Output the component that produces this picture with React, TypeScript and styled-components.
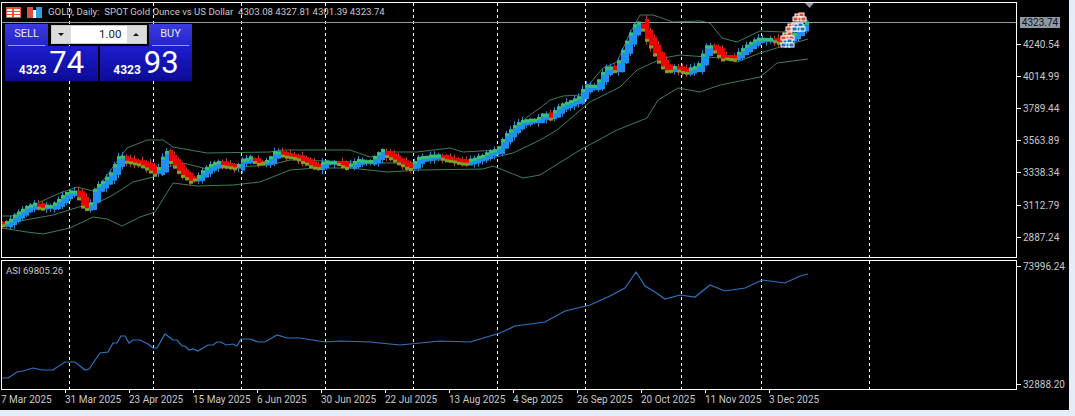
import React from "react";
import styled, { createGlobalStyle } from "styled-components";

const GlobalStyle = createGlobalStyle`
  html, body {
    margin: 0;
    padding: 0;
    background: #e4eef9;
  }
  body {
    font-family: "Roboto", "Liberation Sans", sans-serif;
  }
`;

type Pt = [number, number];

// traced by eye from the reference, page pixels
const closePath: Pt[] = [
  [2, 224], [7, 225], [13, 221], [20, 215], [30, 208], [37, 205], [42, 207], [53, 207], [58, 205], [65, 198],
  [72, 193], [77, 193], [82, 198], [87, 208], [93, 205], [98, 190], [107, 182], [113, 175], [122, 158], [128, 160],
  [140, 163], [150, 167], [157, 173], [163, 168], [167, 153], [173, 160], [183, 172], [193, 180], [200, 178],
  [208, 170], [220, 163], [227, 165], [240, 168], [243, 162], [253, 159], [260, 163], [270, 162], [278, 153],
  [287, 155], [300, 158], [310, 163], [320, 168], [327, 163], [340, 163], [350, 167], [360, 162], [373, 162],
  [385, 152], [393, 157], [403, 163], [413, 168], [420, 160], [433, 157], [442, 157], [453, 160], [468, 163],
  [483, 158], [500, 150], [510, 135], [523, 123], [540, 120], [547, 115], [553, 117], [563, 107], [580, 100],
  [588, 88], [598, 87], [610, 68], [618, 70], [630, 43], [637, 28], [643, 23], [647, 33], [655, 48], [663, 63],
  [670, 70], [678, 68], [687, 72], [700, 68], [710, 47], [718, 50], [723, 57], [737, 58], [743, 52], [760, 40],
  [773, 40], [787, 42], [797, 35], [808, 24],
];

const upperBand: Pt[] = [
  [2, 216], [12, 216], [20, 212], [40, 202], [60, 193], [77, 187], [93, 191], [100, 185], [113, 167], [127, 148],
  [147, 140], [163, 140], [173, 147], [207, 153], [270, 152], [283, 150], [350, 150], [370, 157], [380, 156],
  [390, 152], [417, 152], [450, 148], [463, 152], [497, 150], [527, 117], [540, 108], [550, 100], [563, 96],
  [580, 95], [603, 68], [617, 62], [630, 33], [640, 15], [653, 15], [673, 22], [700, 21], [710, 23], [722, 38],
  [737, 42], [760, 31], [783, 32], [808, 20],
];

const midBand: Pt[] = [
  [20, 221], [53, 215], [82, 206], [93, 205], [113, 195], [133, 182], [153, 177], [167, 167], [183, 163], [207, 169],
  [270, 165], [290, 160], [330, 161], [377, 163], [410, 163], [437, 160], [483, 160], [513, 153], [540, 140],
  [557, 130], [590, 102], [620, 87], [637, 70], [663, 58], [680, 55], [707, 57], [720, 58], [737, 62], [760, 53],
  [780, 47], [808, 39],
];

const lowerBand: Pt[] = [
  [2, 228], [27, 232], [43, 234], [70, 228], [93, 217], [107, 219], [122, 226], [140, 217], [155, 212], [173, 183],
  [197, 186], [233, 185], [260, 182], [270, 178], [290, 170], [317, 168], [350, 168], [387, 172], [420, 170],
  [483, 169], [493, 166], [523, 178], [540, 175], [580, 150], [617, 130], [647, 118], [658, 100], [678, 88],
  [700, 92], [720, 85], [760, 77], [777, 63], [808, 59],
];

const asiPath: Pt[] = [
  [2, 377], [8, 377], [17, 371], [23, 370], [33, 367], [42, 369], [53, 369], [65, 361], [75, 361], [85, 369],
  [89, 368], [100, 352], [108, 351], [113, 342], [117, 342], [121, 335], [125, 335], [129, 342], [133, 339],
  [140, 339], [148, 343], [153, 347], [157, 347], [165, 333], [173, 339], [177, 339], [182, 345], [185, 345],
  [189, 349], [193, 348], [198, 350], [208, 344], [213, 344], [217, 341], [221, 341], [226, 344], [233, 343],
  [237, 345], [241, 338], [250, 338], [258, 341], [265, 341], [277, 334], [287, 337], [300, 337], [325, 341],
  [340, 340], [370, 341], [400, 344], [440, 340], [470, 341], [500, 332], [515, 325], [545, 321], [565, 310],
  [590, 304], [610, 295], [625, 287], [636, 271], [645, 285], [655, 291], [665, 298], [680, 294], [695, 296],
  [710, 284], [725, 290], [745, 287], [762, 279], [785, 282], [800, 275], [808, 273],
];

const gridX = [69, 153, 241, 325, 413, 497, 585, 681, 761, 869];
const priceTicks = ["4240.54", "4014.99", "3789.44", "3563.89", "3338.34", "3112.79", "2887.24"];
const dates = [
  "7 Mar 2025", "31 Mar 2025", "23 Apr 2025", "15 May 2025", "6 Jun 2025", "30 Jun 2025", "22 Jul 2025",
  "13 Aug 2025", "4 Sep 2025", "26 Sep 2025", "20 Oct 2025", "11 Nov 2025", "3 Dec 2025",
];

const yAt = (path: Pt[], x: number) => {
  for (let i = 1; i < path.length; i++) {
    if (x <= path[i][0]) {
      const [x0, y0] = path[i - 1];
      const [x1, y1] = path[i];
      return y0 + ((y1 - y0) * (x - x0)) / (x1 - x0);
    }
  }
  return path[path.length - 1][1];
};

const toPoints = (path: Pt[]) => path.map(([x, y]) => `${x},${y}`).join(" ");

// small repeatable wobble so the bodies are not all alike
const wobble = (i: number) => {
  const v = Math.sin(i * 12.9898) * 43758.5453;
  return v - Math.floor(v);
};

const candles = Array.from({ length: 202 }, (_, i) => {
  const x = 2 + i * 4;
  const from = yAt(closePath, x - 3);
  const to = yAt(closePath, x + 3);
  const up = to <= from;
  const size = 3 + Math.abs(to - from) * 1.3 + wobble(i) * 2;
  const mid = (from + to) / 2;
  return { x, up, top: mid - size / 2, size, wickUp: wobble(i + 300) * 4, wickDown: wobble(i + 600) * 4 };
});

const Screen = styled.div`
  width: 1075px;
  height: 416px;
  overflow: hidden;
  background: #e4eef9;
`;

const Terminal = styled.div`
  width: 1069px;
  height: 410px;
  background: #000;
  display: flex;
  flex-direction: column;
  padding-top: 2px;
  box-sizing: border-box;
`;

const PanelRow = styled.div<{ $height: number }>`
  display: flex;
  height: ${(p) => p.$height}px;
`;

const Gap = styled.div`
  height: 2px;
`;

const Plot = styled.div`
  position: relative;
  width: 1016px;
  margin-left: 1px;
  box-sizing: border-box;
  border: 1px solid #fff;
  overflow: hidden;
`;

const ChartSvg = styled.svg`
  position: absolute;
  left: -2px;
  display: block;
`;

const ChartTitle = styled.div`
  position: absolute;
  top: 3px;
  left: 4px;
  display: flex;
  align-items: center;
  gap: 6px;
  color: #c8c8c8;
  font-size: 9.6px;
  line-height: 12px;
  white-space: pre;
`;

const IndicatorLabel = styled.div`
  position: absolute;
  top: 4px;
  left: 4px;
  color: #c8c8c8;
  font-size: 9.6px;
  line-height: 12px;
`;

const TradePanel = styled.div`
  position: absolute;
  top: 21px;
  left: 3px;
  width: 187px;
  display: grid;
  grid-template-columns: 93px 92px;
  column-gap: 2px;
`;

const TopRow = styled.div`
  grid-column: 1 / 3;
  display: flex;
  height: 22px;
  justify-content: space-between;
`;

const SideButton = styled.div`
  width: 43px;
  box-sizing: border-box;
  background: linear-gradient(#3a3ade, #2424cc);
  color: #e8e8ff;
  font-size: 11px;
  text-align: center;
  line-height: 19px;
  padding-bottom: 3px;
  position: relative;
  &::after {
    content: "";
    position: absolute;
    left: 3px;
    right: 3px;
    bottom: 0;
    height: 1px;
    background: #9a9af0;
  }
`;

const Stepper = styled.div`
  width: 96px;
  height: 19px;
  display: flex;
  background: #fff;
  border: 1px solid #c8c8c8;
  box-sizing: border-box;
  margin-top: 1px;
`;

const StepArrow = styled.div<{ $down?: boolean }>`
  width: 19px;
  background: #dcdcdc;
  display: flex;
  align-items: center;
  justify-content: center;
  &::before {
    content: "";
    border-left: 3px solid transparent;
    border-right: 3px solid transparent;
    ${(p) => (p.$down ? "border-top: 3px solid #111;" : "border-bottom: 3px solid #111;")}
  }
`;

const StepValue = styled.div`
  flex: 1;
  color: #222;
  font-size: 11.5px;
  line-height: 17px;
  text-align: right;
  padding-right: 5px;
`;

const PriceBox = styled.div`
  height: 35px;
  background: linear-gradient(#1d1dd0, #0b0b96);
  color: #fff;
  display: flex;
  align-items: baseline;
  justify-content: center;
  gap: 3px;
`;

const PriceSmall = styled.span`
  font-size: 12px;
  font-weight: 700;
  line-height: 35px;
`;

const PriceBig = styled.span`
  font-size: 31px;
  line-height: 35px;
  position: relative;
  top: -1px;
`;

const PriceAxis = styled.div`
  flex: 1;
  position: relative;
  padding-top: 26px;
`;

const AxisTick = styled.div`
  height: 32.2px;
  display: flex;
  align-items: center;
  color: #c8c8c8;
  font-size: 10px;
  &::before {
    content: "";
    width: 4px;
    height: 1px;
    background: #fff;
    margin-right: 2px;
  }
`;

const CurrentPrice = styled.div`
  position: absolute;
  top: 15px;
  left: 3px;
  width: 40px;
  height: 11px;
  background: #8e99a8;
  color: #111;
  font-size: 10px;
  line-height: 11px;
  text-align: center;
`;

const IndicatorAxis = styled.div`
  flex: 1;
  display: flex;
  flex-direction: column;
  justify-content: space-between;
  color: #c8c8c8;
  font-size: 10px;
`;

const IndicatorTick = styled.div`
  display: flex;
  align-items: center;
  height: 12px;
  &::before {
    content: "";
    width: 4px;
    height: 1px;
    background: #fff;
    margin-right: 2px;
  }
`;

const TimeAxis = styled.div`
  display: flex;
  height: 19px;
  padding-left: 1px;
`;

const DateLabel = styled.div<{ $first?: boolean }>`
  width: 64px;
  box-sizing: border-box;
  color: #c8c8c8;
  font-size: 10px;
  line-height: 18px;
  white-space: nowrap;
  padding-top: 1px;
  position: relative;
  &::before {
    content: "";
    display: ${(p) => (p.$first ? "none" : "block")};
    position: absolute;
    top: -1px;
    left: 0;
    width: 1px;
    height: 4px;
    background: #fff;
  }
`;

const BAND = "#3f7d58";

const GridLines = ({ y1, y2 }: { y1: number; y2: number }) => (
  <>
    {gridX.map((x) => (
      <line key={x} x1={x + 0.5} x2={x + 0.5} y1={y1} y2={y2} stroke="#fff" strokeDasharray="3 3" />
    ))}
  </>
);

const MarkerCluster = ({ x, y, fill }: { x: number; y: number; fill: string }) => (
  <g>
    {[[0, 0], [4, -1], [2, 3], [-2, 3], [6, 3]].map(([dx, dy], i) => (
      <rect
        key={i}
        x={x + dx - 2}
        y={y + dy - 2}
        width={5}
        height={4}
        fill={fill}
        stroke="#fff"
        strokeWidth={1}
      />
    ))}
  </g>
);

const PriceChart = () => (
  <ChartSvg width={1016} height={256} viewBox="0 3 1016 256" style={{ top: 0 }}>
    <GridLines y1={3} y2={258} />
    <polyline points={toPoints(upperBand)} fill="none" stroke={BAND} strokeWidth={1} />
    <polyline points={toPoints(midBand)} fill="none" stroke={BAND} strokeWidth={1} />
    <polyline points={toPoints(lowerBand)} fill="none" stroke={BAND} strokeWidth={1} />
    <line x1={0} x2={1016} y1={22.5} y2={22.5} stroke="#8e99a8" />
    {candles.map((c) => (
      <g key={c.x}>
        <line
          x1={c.x + 0.5}
          x2={c.x + 0.5}
          y1={c.top - c.wickUp}
          y2={c.top + c.size + c.wickDown}
          stroke={c.up ? "#2f86d8" : "#b0402a"}
        />
        <rect x={c.x - 1} y={c.top} width={4} height={c.size} fill={c.up ? "#1f8ff0" : "#f00000"} />
        {c.up ? (
          <rect x={c.x - 1} y={c.top} width={4} height={Math.min(3, c.size)} fill="#35c46a" />
        ) : (
          <rect x={c.x - 1} y={c.top + c.size - 2} width={4} height={3} fill="#7fa020" />
        )}
      </g>
    ))}
    <MarkerCluster x={785} y={35} fill="#d8512f" />
    <MarkerCluster x={797} y={16} fill="#d8512f" />
    <MarkerCluster x={790} y={26} fill="#d8512f" />
    <MarkerCluster x={785} y={42} fill="#1c6fc0" />
    <MarkerCluster x={796} y={26} fill="#1c6fc0" />
    <polygon points="805,3 814,3 809.5,8" fill="#8e99a8" />
  </ChartSvg>
);

const AsiChart = () => (
  <ChartSvg width={1016} height={129} viewBox="0 260 1016 129" style={{ top: 0 }}>
    <GridLines y1={260} y2={389} />
    <polyline points={toPoints(asiPath)} fill="none" stroke="#2f74c0" strokeWidth={1.2} />
  </ChartSvg>
);

const ChartIcons = () => (
  <>
    <svg width="15" height="11" viewBox="0 0 15 11">
      <rect width="15" height="11" fill="#e8503a" />
      <rect x="1" y="2" width="5" height="2" fill="#fff" />
      <rect x="8" y="2" width="6" height="2" fill="#fff" />
      <rect x="1" y="5" width="5" height="2" fill="#fff" />
      <rect x="8" y="5" width="6" height="2" fill="#fff" />
      <rect x="1" y="8" width="5" height="2" fill="#fff" />
      <rect x="8" y="8" width="6" height="2" fill="#fff" />
    </svg>
    <svg width="15" height="11" viewBox="0 0 15 11">
      <rect x="0" y="0" width="6" height="11" fill="#d85040" />
      <rect x="6" y="3" width="3" height="8" fill="#fff" />
      <rect x="9" y="0" width="6" height="11" fill="#2f9fdc" />
    </svg>
  </>
);

export default function App() {
  return (
    <Screen>
      <GlobalStyle />
      <Terminal>
        <PanelRow $height={256}>
          <Plot>
            <PriceChart />
            <ChartTitle>
              <ChartIcons />
              <span>GOLD, Daily:  SPOT Gold Ounce vs US Dollar  4303.08 4327.81 4301.39 4323.74</span>
            </ChartTitle>
            <TradePanel>
              <TopRow>
                <SideButton>SELL</SideButton>
                <Stepper>
                  <StepArrow $down />
                  <StepValue>1.00</StepValue>
                  <StepArrow />
                </Stepper>
                <SideButton>BUY</SideButton>
              </TopRow>
              <PriceBox>
                <PriceSmall>4323</PriceSmall>
                <PriceBig>74</PriceBig>
              </PriceBox>
              <PriceBox>
                <PriceSmall>4323</PriceSmall>
                <PriceBig>93</PriceBig>
              </PriceBox>
            </TradePanel>
          </Plot>
          <PriceAxis>
            <CurrentPrice>4323.74</CurrentPrice>
            {priceTicks.map((t) => (
              <AxisTick key={t}>{t}</AxisTick>
            ))}
          </PriceAxis>
        </PanelRow>
        <Gap />
        <PanelRow $height={130}>
          <Plot>
            <AsiChart />
            <IndicatorLabel>ASI 69805.26</IndicatorLabel>
          </Plot>
          <IndicatorAxis>
            <IndicatorTick>73996.24</IndicatorTick>
            <IndicatorTick>32888.20</IndicatorTick>
          </IndicatorAxis>
        </PanelRow>
        <TimeAxis>
          {dates.map((d, i) => (
            <DateLabel key={d} $first={i === 0}>
              {d}
            </DateLabel>
          ))}
        </TimeAxis>
      </Terminal>
    </Screen>
  );
}
